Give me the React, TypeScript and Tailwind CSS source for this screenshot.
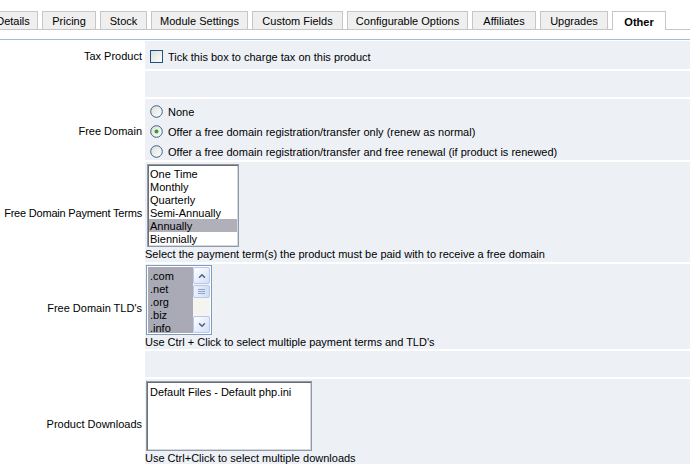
import { ChevronUp, ChevronDown } from 'lucide-react';

const tabs = [
    { label: 'Details', w: 'w-[50px]' },
    { label: 'Pricing', w: 'w-[54px]' },
    { label: 'Stock', w: 'w-[47px]' },
    { label: 'Module Settings', w: 'w-[97px]' },
    { label: 'Custom Fields', w: 'w-[91px]' },
    { label: 'Configurable Options', w: 'w-[121px]' },
    { label: 'Affiliates', w: 'w-[64px]' },
    { label: 'Upgrades', w: 'w-[68px]' },
    { label: 'Other', w: 'w-[54px]', active: true },
];

const paymentTerms = ['One Time', 'Monthly', 'Quarterly', 'Semi-Annually', 'Annually', 'Biennially'];
const tlds = ['.com', '.net', '.org', '.biz', '.info'];

function Radio({ checked }: { checked?: boolean }) {
    return (
        <svg width="13" height="13" viewBox="0 0 13 13" className="ml-[5px] shrink-0">
            <defs>
                <linearGradient id="rg" x1="0" y1="0" x2="1" y2="1">
                    <stop offset="0" stopColor="#dcdcd7" />
                    <stop offset="1" stopColor="#ffffff" />
                </linearGradient>
            </defs>
            <circle cx="6.5" cy="6.5" r="5.8" fill="url(#rg)" stroke="#3d5f86" strokeWidth="1" />
            {checked && <circle cx="6.5" cy="6.5" r="2" fill="#2ca12c" />}
        </svg>
    );
}

function Row({ label, h, tight, children }: { label?: string; h: string; tight?: boolean; children?: React.ReactNode }) {
    return (
        <>
            <div className={`${h} flex items-center justify-end pr-[3px] pt-[3px] whitespace-nowrap ${tight ? 'tracking-[-0.2px]' : ''}`}>
                {label}
            </div>
            <div className={`${h} bg-[#edf1f6]`}>{children}</div>
        </>
    );
}

export default function App() {
    return (
        <div className="w-[690px] h-[464px] overflow-hidden bg-white text-[11px] leading-[13px] text-black font-['Liberation_Sans',Arial,sans-serif]">
            {/* Tabs */}
            <div className="h-[30px] pt-[11px] border-b border-[#c6c6c6]">
                <div className="flex gap-[4px] -ml-[12px]">
                    {tabs.map((t) => (
                        <div
                            key={t.label}
                            className={`${t.w} shrink-0 flex items-center justify-center pt-[2px] border border-b-0 border-[#c6c6c6] whitespace-nowrap ${t.active
                                ? 'h-[19px] bg-white font-bold relative z-10'
                                : 'h-[18px] bg-[#efefef]'
                                }`}
                        >
                            {t.label}
                        </div>
                    ))}
                </div>
            </div>

            <div className="mt-[9px] border-t border-[#9dbce4] pt-[1px]">
                <div className="grid grid-cols-[145px_1fr] gap-y-[2px]">
                    <Row label="Tax Product" h="h-[28px]">
                        <div className="h-full flex items-center pt-[2px]">
                            <div className="ml-[5px] w-[13px] h-[13px] border border-[#1c5180] bg-gradient-to-br from-[#dcdcd7] to-white shrink-0" />
                            <span className="ml-[5px] pt-[2px]">Tick this box to charge tax on this product</span>
                        </div>
                    </Row>

                    <Row h="h-[26px]" />

                    <Row label="Free Domain" h="h-[61px]">
                        <div className="pt-[2px]">
                            <div className="h-[20px] flex items-center gap-[5px]">
                                <Radio />
                                <span className="pt-[2px]">None</span>
                            </div>
                            <div className="h-[20px] flex items-center gap-[5px]">
                                <Radio checked />
                                <span className="pt-[2px]">Offer a free domain registration/transfer only (renew as normal)</span>
                            </div>
                            <div className="h-[20px] flex items-center gap-[5px]">
                                <Radio />
                                <span className="pt-[2px]">Offer a free domain registration/transfer and free renewal (if product is renewed)</span>
                            </div>
                        </div>
                    </Row>

                    <Row label="Free Domain Payment Terms" h="h-[100px]" tight>
                        <div className="pt-[2px]">
                            <div className="ml-[2px] w-[92px] h-[83px] border border-[#8c9aae] shadow-[inset_1px_1px_0_#6e6e6e,inset_-1px_-1px_0_#d8d8d8] bg-white pt-[2px] px-[1px]">
                                {paymentTerms.map((p) => (
                                    <div key={p} className={`h-[13px] pl-[1px] pt-[1px] ${p === 'Annually' ? 'bg-[#b0b0ba]' : ''}`}>
                                        {p}
                                    </div>
                                ))}
                            </div>
                            <div className="h-[14px] pt-[1px] whitespace-nowrap">
                                Select the payment term(s) the product must be paid with to receive a free domain
                            </div>
                        </div>
                    </Row>

                    <Row label="Free Domain TLD's" h="h-[85px]">
                        <div className="pt-[1px]">
                            <div className="ml-[1px] w-[66px] h-[70px] border border-[#7f9db9] bg-white p-[1px] flex">
                                <div className="flex-1 bg-[#a9aab5] pt-[2px]">
                                    {tlds.map((t) => (
                                        <div key={t} className="h-[13px] pl-[2px] pt-[1px]">{t}</div>
                                    ))}
                                </div>
                                <div className="w-[17px] bg-[#f4f4f0] flex flex-col justify-between">
                                    <div className="h-[17px] rounded-[2px] border border-[#b8c8ec] bg-gradient-to-br from-white to-[#d4def6] flex items-center justify-center">
                                        <ChevronUp size={10} strokeWidth={3.5} className="text-[#4d6185]" />
                                    </div>
                                    <div className="flex-1 pt-[1px]">
                                        <div className="h-[13px] rounded-[2px] border border-[#b8c8ec] bg-gradient-to-r from-[#eef2fd] to-[#d2dcf4] flex flex-col items-center justify-center gap-[1px]">
                                            <div className="w-[7px] h-px bg-[#8fa3c8]" />
                                            <div className="w-[7px] h-px bg-[#8fa3c8]" />
                                            <div className="w-[7px] h-px bg-[#8fa3c8]" />
                                        </div>
                                    </div>
                                    <div className="h-[17px] rounded-[2px] border border-[#b8c8ec] bg-gradient-to-br from-white to-[#d4def6] flex items-center justify-center">
                                        <ChevronDown size={10} strokeWidth={3.5} className="text-[#4d6185]" />
                                    </div>
                                </div>
                            </div>
                            <div className="h-[14px] pt-[1px] whitespace-nowrap">
                                Use Ctrl + Click to select multiple payment terms and TLD's
                            </div>
                        </div>
                    </Row>

                    <Row h="h-[26px]" />

                    <Row label="Product Downloads" h="h-[88px]">
                        <div className="pt-[2px]">
                            <div className="ml-[1px] w-[166px] h-[70px] border border-[#8c9aae] shadow-[inset_1px_1px_0_#6e6e6e,inset_-1px_-1px_0_#d8d8d8] bg-white pt-[4px] pl-[3px]">
                                <div className="h-[13px]">Default Files - Default php.ini</div>
                            </div>
                            <div className="h-[14px] pt-[1px] whitespace-nowrap">
                                Use Ctrl+Click to select multiple downloads
                            </div>
                        </div>
                    </Row>
                </div>
            </div>
        </div>
    );
}
